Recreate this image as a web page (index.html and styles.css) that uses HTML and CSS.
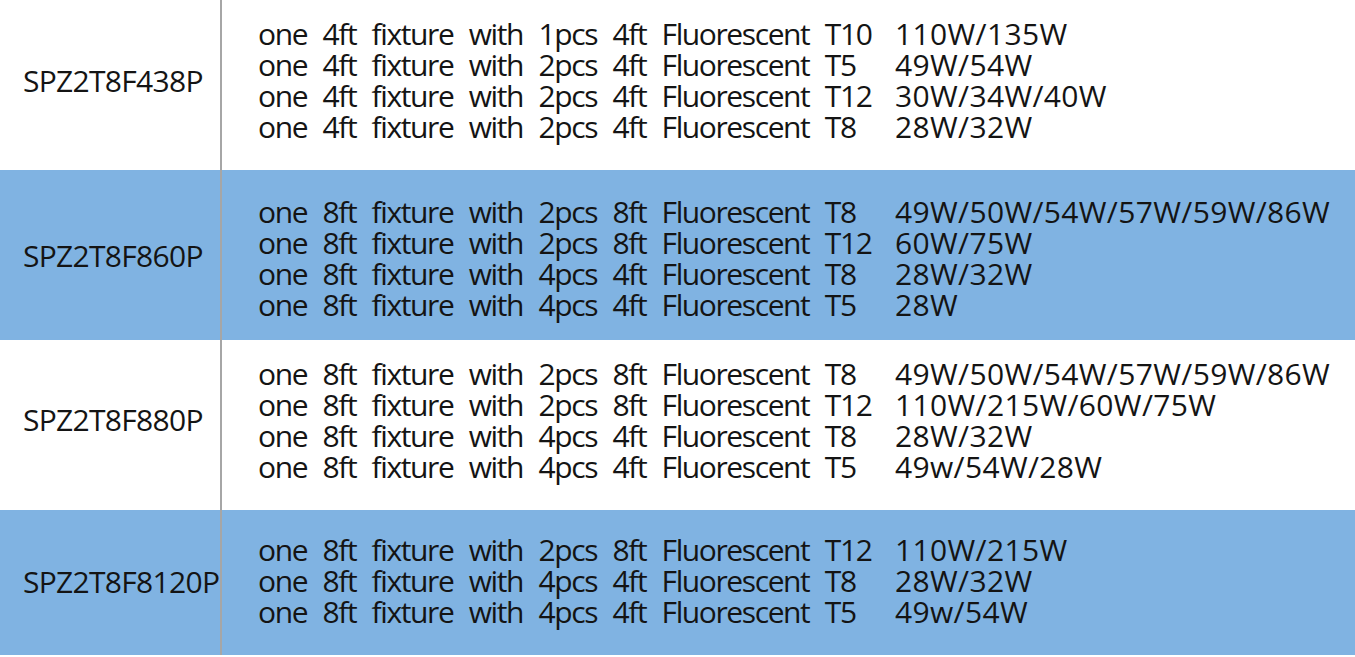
FILE: index.html
```html
<!DOCTYPE html>
<html lang="en">
<head>
<meta charset="utf-8">
<title>Fixtures</title>
<link rel="stylesheet" href="styles.css">
</head>
<body>
<div class="table">
  <div class="row row-white r1">
    <div class="label">SPZ2T8F438P</div>
    <div class="lines">
      <div class="line"><span class="desc">one 4ft fixture with 1pcs 4ft Fluorescent T10</span><span class="watt">110W/135W</span></div>
      <div class="line"><span class="desc">one 4ft fixture with 2pcs 4ft Fluorescent T5</span><span class="watt">49W/54W</span></div>
      <div class="line"><span class="desc">one 4ft fixture with 2pcs 4ft Fluorescent T12</span><span class="watt">30W/34W/40W</span></div>
      <div class="line"><span class="desc">one 4ft fixture with 2pcs 4ft Fluorescent T8</span><span class="watt">28W/32W</span></div>
    </div>
  </div>
  <div class="row row-blue r2">
    <div class="label">SPZ2T8F860P</div>
    <div class="lines">
      <div class="line"><span class="desc">one 8ft fixture with 2pcs 8ft Fluorescent T8</span><span class="watt">49W/50W/54W/57W/59W/86W</span></div>
      <div class="line"><span class="desc">one 8ft fixture with 2pcs 8ft Fluorescent T12</span><span class="watt">60W/75W</span></div>
      <div class="line"><span class="desc">one 8ft fixture with 4pcs 4ft Fluorescent T8</span><span class="watt">28W/32W</span></div>
      <div class="line"><span class="desc">one 8ft fixture with 4pcs 4ft Fluorescent T5</span><span class="watt">28W</span></div>
    </div>
  </div>
  <div class="row row-white r3">
    <div class="label">SPZ2T8F880P</div>
    <div class="lines">
      <div class="line"><span class="desc">one 8ft fixture with 2pcs 8ft Fluorescent T8</span><span class="watt">49W/50W/54W/57W/59W/86W</span></div>
      <div class="line"><span class="desc">one 8ft fixture with 2pcs 8ft Fluorescent T12</span><span class="watt">110W/215W/60W/75W</span></div>
      <div class="line"><span class="desc">one 8ft fixture with 4pcs 4ft Fluorescent T8</span><span class="watt">28W/32W</span></div>
      <div class="line"><span class="desc">one 8ft fixture with 4pcs 4ft Fluorescent T5</span><span class="watt">49w/54W/28W</span></div>
    </div>
  </div>
  <div class="row row-blue r4">
    <div class="label">SPZ2T8F8120P</div>
    <div class="lines">
      <div class="line"><span class="desc">one 8ft fixture with 2pcs 8ft Fluorescent T12</span><span class="watt">110W/215W</span></div>
      <div class="line"><span class="desc">one 8ft fixture with 4pcs 4ft Fluorescent T8</span><span class="watt">28W/32W</span></div>
      <div class="line"><span class="desc">one 8ft fixture with 4pcs 4ft Fluorescent T5</span><span class="watt">49w/54W</span></div>
    </div>
  </div>
</div>
</body>
</html>
```
FILE: styles.css
```css
html, body {
  margin: 0;
  padding: 0;
  background: #ffffff;
}
body {
  font-family: "Open Sans", "Noto Sans", "Liberation Sans", sans-serif;
  color: #141414;
  width: 1355px;
  height: 657px;
  overflow: hidden;
}
.table {
  display: flex;
  flex-direction: column;
}
.row {
  display: grid;
  grid-template-columns: 222px 1fr;
}
.row-blue {
  background: #80b3e2;
}
.r1 { height: 170px; }
.r2 { height: 170px; }
.r3 { height: 170px; }
.r4 { height: 145px; }
.label {
  border-right: 2px solid #a6a6a6;
  display: flex;
  align-items: center;
  padding-left: 23px;
  font-size: 30px;
  letter-spacing: -0.7px;
  white-space: nowrap;
}
.r1 .label { padding-bottom: 10px; }
.r3 .label { padding-bottom: 12px; }
.r4 .label { padding-bottom: 2px; }
.lines {
  display: flex;
  flex-direction: column;
  justify-content: center;
  padding-left: 36px;
}
.r1 .lines { padding-bottom: 10px; }
.r2 .lines { padding-top: 6px; }
.r3 .lines { padding-bottom: 10px; }
.r4 .lines { padding-bottom: 4px; }
.line {
  display: flex;
  height: 31px;
  line-height: 31px;
  font-size: 30px;
  white-space: nowrap;
}
.desc {
  flex: 0 0 637px;
  letter-spacing: -1.4px;
  word-spacing: 9px;
}
.watt {
  letter-spacing: 0.35px;
}
```
